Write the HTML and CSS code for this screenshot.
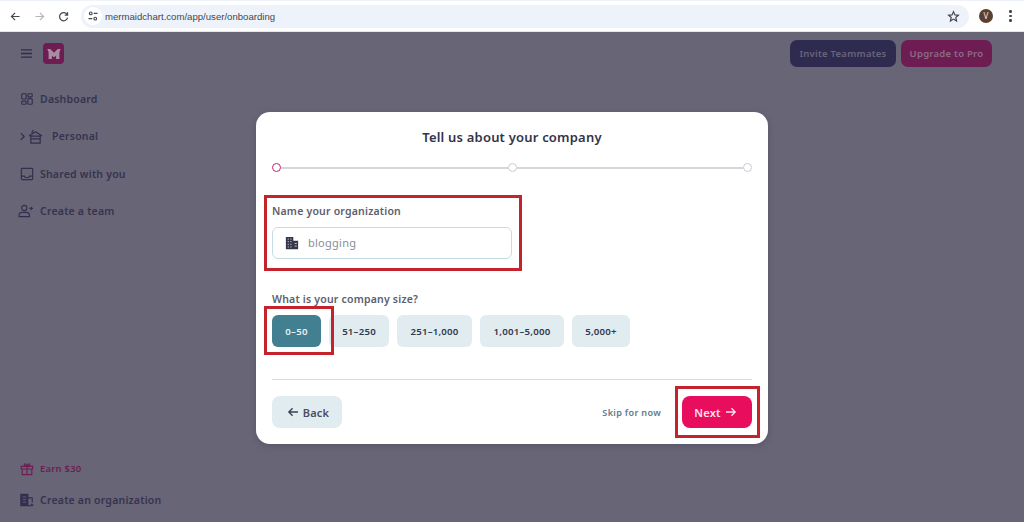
FILE: index.html
```html
<!DOCTYPE html>
<html lang="en">
<head>
<meta charset="utf-8">
<title>Onboarding</title>
<link rel="stylesheet" href="styles.css">
</head>
<body>
<header class="chrome">
  <svg class="cicon" viewBox="0 0 16 16"><path d="M13 8H3.500M7.500 3.500 3 8l4.500 4.500"/></svg>
  <svg class="cicon dim" viewBox="0 0 16 16"><path d="M3 8h9.500M8.500 3.500 13 8l-4.500 4.500"/></svg>
  <svg class="cicon" viewBox="0 0 16 16"><path d="M12.600 6A5 5 0 1 0 13 9.500M13 2.800V6.300H9.500"/></svg>
  <div class="omni">
    <span class="tune"><svg viewBox="0 0 16 16"><circle cx="5" cy="4.500" r="1.800"/><path d="M9 4.500h5M2 11.500h5"/><circle cx="11" cy="11.500" r="1.800"/></svg></span>
    <span class="url">mermaidchart.com/app/user/onboarding</span>
    <svg class="star" viewBox="0 0 16 16"><path d="m8 2 1.800 4 4.200.4-3.200 2.800 1 4.300L8 11.200l-3.800 2.300 1-4.300L2 6.400 6.200 6z"/></svg>
  </div>
  <span class="avatar">V</span>
  <span class="kebab"><i></i><i></i><i></i></span>
</header>

<div class="app">
  <aside class="side">
    <div class="brand">
      <svg class="burger" viewBox="0 0 14 12"><path d="M1 2h12M1 6h12M1 10h12"/></svg>
      <span class="logo"><svg viewBox="0 0 16 12"><path d="M0 0h3.500L8 4.500 12.500 0H16l-1.500 4v8H10.500V8L8 10 5.500 8v4H1.500V4z"/></svg></span>
    </div>
    <nav class="nav">
      <a class="item"><svg viewBox="0 0 16 16"><rect x="2" y="2" width="5" height="6" rx="1"/><rect x="9" y="2" width="5" height="3.500" rx="1"/><rect x="2" y="10.500" width="5" height="3.500" rx="1"/><rect x="9" y="7.500" width="5" height="6.500" rx="1"/></svg>Dashboard</a>
      <a class="item sub"><svg class="chev" viewBox="0 0 6 10"><path d="m1 1 4 4-4 4"/></svg><svg class="home" viewBox="0 0 16 16"><path d="M3 7.500h10V15H3zM1 7.500 8 3l7 4.500M3 10.500h10M5.500 1 4 4"/></svg>Personal</a>
      <a class="item"><svg viewBox="0 0 16 16"><rect x="1.500" y="1.500" width="13" height="13" rx="1"/><path d="M1.500 10.500h3.500l1 1.500h4l1-1.500h3.500"/></svg>Shared with you</a>
      <a class="item team"><svg viewBox="0 0 18 16"><circle cx="7" cy="4.500" r="3"/><path d="M1 14.500v-1.500c0-2 1.500-3.500 3.500-3.500h5c2 0 3.500 1.500 3.500 3.500v1.500zM15 3v4M13 5h4"/></svg>Create a team</a>
    </nav>
    <div class="foot">
      <a class="item earn"><svg viewBox="0 0 16 16"><path d="M1.500 5h13v3h-13zM2.500 8v6.500h11V8M8 5v9.500M8 5C6 5 4.500 4 5 2.500 6 1 7.500 3 8 5c.5-2 2-4 3-2.500C11.500 4 10 5 8 5Z"/></svg>Earn $30</a>
      <a class="item"><svg viewBox="0 0 16 16"><path class="solid" d="M1 1.500h8v13H1z"/><path class="cut" d="M3 4.500h4M3 7.500h4M3 10.500h4"/><path d="M9 5.500h5v5M9 14.500h2.500M13.500 12v3.500M11.800 13.800h3.500"/></svg>Create an organization</a>
    </div>
  </aside>
  <main class="main">
    <div class="actions">
      <button class="top invite">Invite Teammates</button>
      <button class="top upgrade">Upgrade to Pro</button>
    </div>
  </main>

  <div class="overlay">
    <section class="modal">
      <h1 class="title">Tell us about your company</h1>
      <div class="stepper">
        <span class="dot on"></span>
        <span class="line"></span>
        <span class="dot"></span>
        <span class="line"></span>
        <span class="dot"></span>
      </div>
      <div class="field">
        <label class="label">Name your organization</label>
        <div class="input">
          <svg viewBox="0 0 16 16"><path d="M1 1h8.500v14H1zM9.500 5.500H15V15H9.500z"/><path class="holes" d="M3 3.500h1.500M6 3.500h1.500M3 6.500h1.500M6 6.500h1.500M3 9.500h1.500M6 9.500h1.500M3 12.500h1.500M6 12.500h1.500M11 8.500h2.500M11 11.500h2.500"/></svg>
          <span>blogging</span>
        </div>
        <span class="mark mark-name"></span>
      </div>
      <div class="field size">
        <label class="label">What is your company size?</label>
        <div class="chips">
          <button class="chip active">0–50</button>
          <button class="chip">51–250</button>
          <button class="chip">251–1,000</button>
          <button class="chip">1,001–5,000</button>
          <button class="chip">5,000+</button>
        </div>
        <span class="mark mark-chip"></span>
      </div>
      <hr class="rule">
      <div class="bottom">
        <button class="btn back"><svg viewBox="0 0 14 12"><path d="M13 6H2M6.500 1.500 2 6l4.500 4.500"/></svg>Back</button>
        <div class="right">
          <a class="skip">Skip for now</a>
          <button class="btn next">Next<svg viewBox="0 0 14 12"><path d="M1 6h11M7.500 1.500 12 6l-4.500 4.500"/></svg></button>
          <span class="mark mark-next"></span>
        </div>
      </div>
    </section>
  </div>
</div>
</body>
</html>
```
FILE: styles.css
```css
* { box-sizing: border-box; }
html, body { margin: 0; height: 100%; }
body {
  width: 1024px;
  height: 522px;
  overflow: hidden;
  font-family: "Noto Sans", "Liberation Sans", sans-serif;
  display: flex;
  flex-direction: column;
  background: #686577;
}
button { font-family: inherit; border: 0; cursor: pointer; }
a { color: inherit; text-decoration: none; }

/* browser chrome */
.chrome {
  height: 32px;
  flex: none;
  background: #fff;
  border-top: 1px solid #eef2fb;
  border-bottom: 1px solid #e4e6ec;
  display: flex;
  align-items: center;
  padding: 0 12px 0 9px;
  color: #3f4247;
}
.cicon { width: 13px; height: 13px; fill: none; stroke: #45484d; stroke-width: 1.500; margin-right: 11px; }
.cicon.dim { stroke: #b3b6bb; }
.omni {
  margin-left: 0;
  width: 888px;
  height: 23px;
  background: #eef2fb;
  border-radius: 12px;
  display: flex;
  align-items: center;
  padding: 0 9px 0 3px;
}
.tune { width: 18px; height: 18px; border-radius: 50%; background: #fff; display: flex; align-items: center; justify-content: center; margin-right: 3px; }
.tune svg { width: 12px; height: 12px; fill: none; stroke: #45484d; stroke-width: 1.500; }
.url { color: #44474c; flex: 1; font-family: "Liberation Sans", sans-serif; font-size: 9.600px; }
.star { width: 13px; height: 13px; fill: none; stroke: #3f4247; stroke-width: 1.400; }
.avatar {
  width: 14px; height: 14px; border-radius: 50%;
  background: #5b3f30; color: #f2e9e3; margin-left: 10px;
  font-size: 8px; line-height: 14px; text-align: center; flex: none;
}
.kebab { margin-left: 16px; display: flex; flex-direction: column; gap: 2px; }
.kebab i { width: 2.500px; height: 2.500px; border-radius: 50%; background: #45484d; display: block; }

/* app shell */
.app { flex: 1; display: flex; position: relative; min-height: 0; }
.side {
  width: 200px;
  padding: 11px 0 0 20px;
  display: flex;
  flex-direction: column;
  color: #2d2a4a;
}
.brand { display: flex; align-items: center; gap: 10px; height: 21px; }
.burger { width: 13px; height: 11px; fill: none; stroke: #2f2d4a; stroke-width: 1.500; }
.logo { width: 21px; height: 21px; border-radius: 4px; background: #6e1d52; display: flex; align-items: center; justify-content: center; }
.logo svg { width: 14px; height: 10px; fill: #a78ca3; }
.nav { display: flex; flex-direction: column; gap: 18.500px; margin-top: 25px; }
.item {
  display: flex; align-items: center; gap: 6px;
  height: 19px;
  font-size: 10.500px; font-weight: 600; letter-spacing: .2px; color: #36334f;
  white-space: nowrap;
}
.item svg { width: 14px; height: 14px; fill: none; stroke: #312e4e; stroke-width: 1.300; flex: none; }
.item .chev { width: 5px; height: 9px; margin-right: -3px; stroke-width: 1.500; }
.item .solid { fill: #312e4e; }
.item .cut { stroke: #686577; stroke-width: 1; }
.team { margin-left: -2px; gap: 6px; }
.team svg { width: 16px; }
.sub .home { width: 15px; height: 15px; margin-right: 3px; margin-left: 0; }
.foot { margin-top: auto; display: flex; flex-direction: column; gap: 12px; padding-bottom: 13px; }
.earn { color: #6e1d52; font-size: 9.500px; }
.earn svg { stroke: #6e1d52; }

.main { flex: 1; padding: 8px 32px 0 0; }
.actions { display: flex; justify-content: flex-end; gap: 5px; }
.top {
  height: 27px; border-radius: 7px;
  font-size: 9.500px; font-weight: 600; letter-spacing: .25px;
  padding: 0; white-space: nowrap;
}
.invite { background: #2f2a50; color: #68657a; width: 106px; }
.upgrade { background: #6e1d52; color: #8d6a88; width: 91px; }

/* modal */
.overlay {
  position: absolute; inset: 0;
  display: flex; align-items: center; justify-content: center;
  padding-top: 2px;
}
.modal {
  width: 512px; height: 332px;
  background: #fff; border-radius: 14px;
  padding: 15px 16px 16px;
  display: flex; flex-direction: column;
  color: #2d2d3f;
  box-shadow: 0 2px 6px rgba(40,38,60,.25);
}
.title { margin: 0; text-align: center; font-size: 13px; line-height: 20px; font-weight: 600; letter-spacing: .2px; color: #33334a; }
.stepper { display: flex; align-items: center; margin-top: 16px; height: 9px; }
.dot { width: 9px; height: 9px; border-radius: 50%; border: 1px solid #c9ccd2; background: #fff; flex: none; }
.dot.on { border: 1.500px solid #c0246e; }
.line { flex: 1; height: 2px; background: #d5d6da; }
.field { position: relative; }
.label { display: block; font-size: 10.500px; font-weight: 600; line-height: 16px; letter-spacing: .2px; color: #5c5e6e; margin-top: 31px; }
.input {
  margin-top: 8px; width: 240px; height: 32px;
  border: 1px solid #c6dde2; border-radius: 6px;
  display: flex; align-items: center; gap: 9px; padding-left: 12px;
  font-size: 11px; line-height: 14px; color: #8a8d96; letter-spacing: .25px;
}
.input svg { width: 14px; height: 14px; fill: #34344a; flex: none; }
.input .holes { fill: none; stroke: #fff; stroke-width: .8; }
.size .label { margin-top: 32px; }
.chips { display: flex; gap: 8px; margin-top: 8px; }
.chip {
  height: 32px; border-radius: 6px; background: #e0ecf0;
  font-size: 9.700px; font-weight: 600; letter-spacing: .2px; color: #33384a;
  padding: 0;
}
.chip:nth-child(1) { width: 49px; }
.chip:nth-child(2) { width: 60px; }
.chip:nth-child(3) { width: 75px; }
.chip:nth-child(4) { width: 84px; }
.chip:nth-child(5) { width: 58px; }
.chip.active { background: #427f90; color: #e7f1f3; }
.rule { width: 100%; border: 0; height: 1px; background: #d9d9dc; margin: 32px 0 16px; }
.bottom { display: flex; justify-content: space-between; align-items: center; }
.right { display: flex; align-items: center; gap: 21px; position: relative; }
.btn {
  height: 32px; width: 70px; border-radius: 8px;
  display: flex; align-items: center; justify-content: center; gap: 5px;
  font-size: 11px; font-weight: 600; letter-spacing: .2px;
  padding: 0;
}
.btn svg { width: 12px; height: 10px; fill: none; stroke-width: 1.600; }
.back { background: #e0ecf0; color: #4a4d60; padding-left: 2px; gap: 4px; }
.back svg { stroke: #3c3f52; }
.next { background: #e80e5d; color: #fbe4ec; gap: 4px; padding-right: 3px; }
.next svg { stroke: #fbe4ec; }
.skip { font-size: 9.100px; font-weight: 600; letter-spacing: .3px; color: #5f7c88; }

/* red annotation frames */
.mark { position: absolute; border: 3px solid #c4232d; pointer-events: none; }
.mark-name { left: -8px; top: 23px; width: 258px; height: 76px; }
.mark-chip { left: -8px; top: 47px; width: 70px; height: 49px; }
.mark-next { right: -8px; top: -10px; width: 85px; height: 52px; }
```
